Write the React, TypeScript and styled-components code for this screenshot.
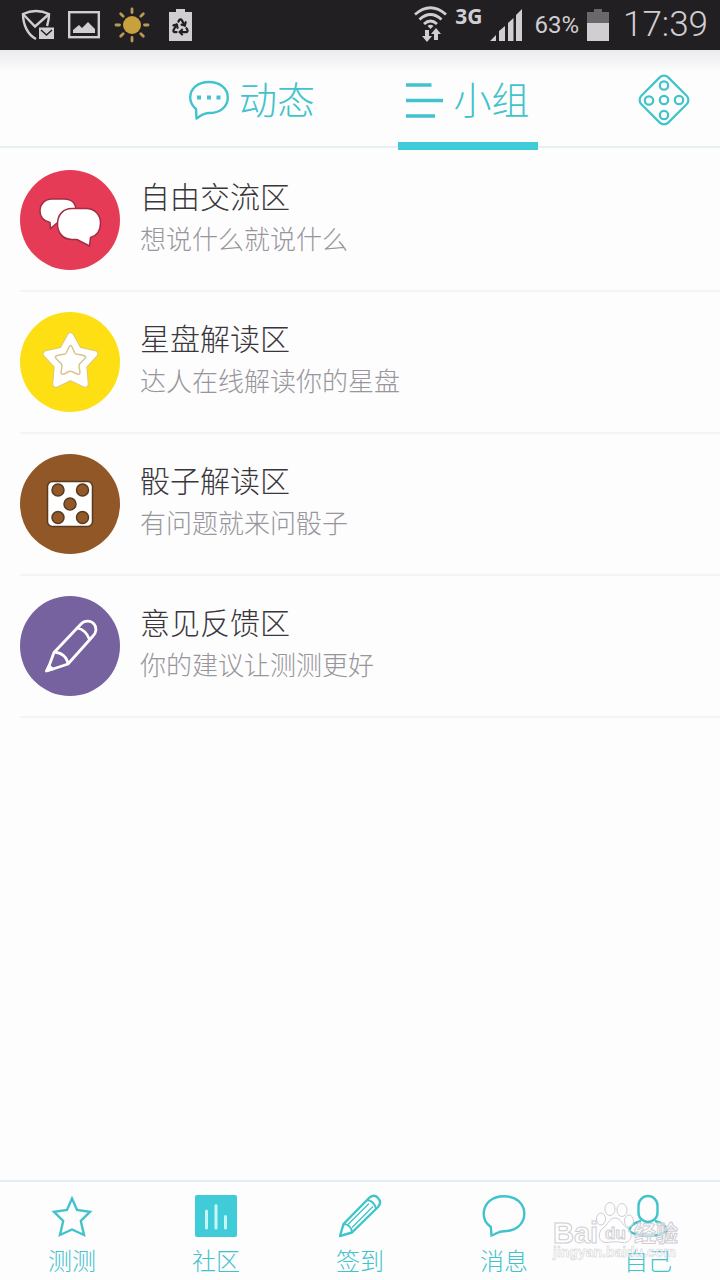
import React from "react";
import styled, { createGlobalStyle } from "styled-components";
import { Recycle } from "lucide-react";

const TEAL = "#40cbd8";
const LINE = "#41c3cc";
const STATUS = "#d0ced1";
const STATUS_BG = "#221f22";

const GlobalStyle = createGlobalStyle`
  * { box-sizing: border-box; }
  body {
    margin: 0;
    background: #fdfdfd;
    font-family: "Noto Sans CJK SC", sans-serif;
    font-weight: 300;
  }
  button { font: inherit; border: 0; padding: 0; background: none; cursor: pointer; }
  a { text-decoration: none; color: inherit; }
  svg { display: block; flex: none; }
`;

const Screen = styled.div`
  min-height: 100vh;
  display: flex;
  flex-direction: column;
`;

const StatusBar = styled.div`
  height: 50px;
  flex: none;
  display: flex;
  align-items: center;
  justify-content: space-between;
  padding: 0 12px 0 21px;
  background: ${STATUS_BG};
  color: ${STATUS};
  font-family: Roboto, sans-serif;
`;

const StatusGroup = styled.div<{ $gap: number }>`
  display: flex;
  align-items: center;
  gap: ${(p) => p.$gap}px;
`;

const Network = styled.span`
  align-self: flex-start;
  font: 700 21px/22px "Noto Sans", sans-serif;
`;

const Percent = styled.span`
  font-size: 24px;
  line-height: 28px;
  font-weight: 400;
  margin-left: 4px;
`;

const Clock = styled.time`
  font-size: 35px;
  line-height: 40px;
  font-weight: 300;
  margin-left: 6px;
`;

const Header = styled.header`
  height: 98px;
  flex: none;
  display: grid;
  grid-template-columns: 2fr 3fr 3fr 2fr;
  border-bottom: 2px solid #e6f1f4;
  background: linear-gradient(#ebe9ec, #fdfdfd 22px);
`;

const TabCell = styled.div<{ $column: number }>`
  grid-column: ${(p) => p.$column};
  display: flex;
  justify-content: center;
  margin-bottom: -4px;
`;

const Tab = styled.button<{ $active?: boolean }>`
  display: flex;
  align-items: center;
  gap: 10px;
  padding: 8px 8px 0;
  border-bottom: 8px solid ${(p) => (p.$active ? TEAL : "transparent")};
  color: ${LINE};
  font-size: 38px;
  line-height: 56px;
  white-space: nowrap;
`;

const TabLabel = styled.span`
  padding-bottom: 4px;
`;

const DiceButton = styled.button`
  grid-column: 4;
  justify-self: end;
  margin-right: 30px;
  padding-top: 4px;
`;

const List = styled.ul`
  flex: 1;
  list-style: none;
  margin: 0;
  padding: 2px 0 0 20px;
`;

const Row = styled.li`
  border-bottom: 2px solid #f4f4f5;
`;

const RowLink = styled.a`
  display: flex;
  gap: 20px;
  padding: 20px 20px 20px 0;
`;

const Avatar = styled.div<{ $color: string }>`
  width: 100px;
  height: 100px;
  flex: none;
  border-radius: 50%;
  background: ${(p) => p.$color};
`;

const RowText = styled.div`
  padding-top: 4px;
`;

const Title = styled.h2`
  margin: 0;
  font-size: 30px;
  line-height: 42px;
  font-weight: 300;
  color: #39363c;
`;

const Subtitle = styled.p`
  margin: 0;
  font-size: 26px;
  line-height: 44px;
  color: #98969c;
`;

const NavBar = styled.nav`
  position: relative;
  flex: none;
  display: grid;
  grid-template-columns: repeat(5, 1fr);
  border-top: 2px solid #dff0f2;
`;

const NavItem = styled.a`
  display: flex;
  flex-direction: column;
  align-items: center;
  height: 98px;
  padding-top: 12px;
  color: ${LINE};
  font-size: 24px;
  line-height: 44px;
`;

const Watermark = styled.svg`
  position: absolute;
  right: 38px;
  bottom: 14px;
  pointer-events: none;
`;

const ShieldMailIcon = () => (
  <svg width="33" height="32" viewBox="0 0 33 32" fill="none" stroke={STATUS} strokeWidth="2.4">
    <path d="M15 30C7 26 2 16 2 5Q15-1 28 5Q28 11 26 17" />
    <path d="M2 5L14 17.500L28 5" />
    <path d="M18 18.500H33V30H18Z" fill={STATUS} stroke="none" />
    <path d="M20 21L25.500 26L31 21" stroke={STATUS_BG} strokeWidth="1.500" />
  </svg>
);

const PictureIcon = () => (
  <svg width="32" height="28" viewBox="0 0 32 28">
    <rect x="1.200" y="1.200" width="29.600" height="25" fill="none" stroke={STATUS} strokeWidth="2.400" />
    <path d="M5 22V19L11 14L14 17L20 11L27 18V22Z" fill={STATUS} />
  </svg>
);

const SunIcon = () => (
  <svg width="36" height="36" viewBox="-18 -18 36 36">
    <circle r="9" fill="#c8a03d" />
    {[0, 45, 90, 135, 180, 225, 270, 315].map((a) => (
      <path key={a} d="M12.500 0H16" transform={`rotate(${a})`} stroke="#b99a55" strokeWidth="2.800" strokeLinecap="round" />
    ))}
  </svg>
);

const RecycleBatteryIcon = () => (
  <svg width="31" height="34" viewBox="0 0 31 34">
    <path d="M5 4H12V1H21V4H28V33H5Z" fill={STATUS} />
    <Recycle x={7} y={9} size={19} color={STATUS_BG} strokeWidth={2.8} />
  </svg>
);

const WifiIcon = () => (
  <svg width="33" height="38" viewBox="0 0 33 38" fill="none" stroke={STATUS} strokeWidth="2.800">
    <path d="M1 8.500Q16.500-5 32 8.500" />
    <path d="M5.500 13.500Q16.500 3.500 27.500 13.500" />
    <path d="M10 18Q16.500 12 23 18" />
    <path d="M13.500 20Q16.500 17.500 19.500 20L16.500 23Z" fill={STATUS} stroke="none" />
    <path d="M11 24H15V30H18L13 36L8 30H11Z M20 34H24V28H27L22 22L17 28H20Z" fill={STATUS} stroke="none" />
  </svg>
);

const SignalIcon = () => (
  <svg width="32" height="32" viewBox="0 0 32 32" fill={STATUS}>
    <path d="M0 32L6 26V32Z M9 22L15 17V32H9Z M18 14L23.500 9V32H18Z M26 6L32 0V32H26Z" />
  </svg>
);

const BatteryIcon = () => (
  <svg width="22" height="34" viewBox="0 0 22 34">
    <path d="M0 4H7V1H15V4H22V15H0Z" fill="#6a686a" />
    <path d="M0 15H22V33H0Z" fill={STATUS} />
  </svg>
);

const FeedIcon = () => (
  <svg width="40" height="40" viewBox="0 0 40 40" fill="none" stroke={LINE} strokeWidth="2.400" strokeLinejoin="round">
    <path d="M7.500 38.500L7 29C3.500 26 1.200 22 1.200 17.500C1.200 8.500 9 2 20 2C31 2 38.800 8.500 38.800 17.500C38.800 27 31 33 20 33C14.500 33 13 35 7.500 38.500Z" />
    <path d="M8 17.500H12M18 17.500H22M27.500 17.500H31.500" strokeWidth="4" />
  </svg>
);

const GroupIcon = () => (
  <svg width="37" height="40" viewBox="0 0 37 40" stroke={LINE} strokeWidth="3.400">
    <path d="M0 5H25.500M0 20.500H37M0 36H29" />
  </svg>
);

const DiceIcon = () => (
  <svg width="52" height="52" viewBox="0 0 52 52" fill="none" stroke={LINE} strokeWidth="2.200">
    <rect x="7" y="7" width="38" height="38" rx="6" transform="rotate(45 26 26)" />
    <circle cx="26" cy="11.500" r="4.200" />
    <circle cx="11" cy="26.500" r="4.200" />
    <circle cx="26" cy="26" r="4.200" />
    <circle cx="41" cy="26" r="4.200" />
    <circle cx="26" cy="41" r="4.200" />
  </svg>
);

const BubblesArt = () => (
  <svg viewBox="0 0 100 100" fill="#fff" stroke="#a52c45" strokeWidth="1.500">
    <path d="M32 29H44C52 29 56 34 56 41C56 49 51 53 44 53H37L30.500 58.500L30 52.500C24 51 20 47 20 41C20 34 25 29 32 29Z" />
    <path d="M52 38.500H66C75 38.500 80.500 45 80.500 53C80.500 61 76 66 70.500 67.500L69.500 76L57 69.500H52C43 69.500 37.500 63 37.500 54C37.500 45 43 38.500 52 38.500Z" />
  </svg>
);

const STAR = "M50.500 24L58.500 38.500L74.500 42L63.500 54L65 72L50.500 65L36 72L37.500 54L26.500 42L42.500 38.500Z";

const StarArt = () => (
  <svg viewBox="0 0 100 100" strokeLinejoin="round">
    <path d={STAR} fill="#fff" stroke="#dfc878" strokeWidth="7.500" />
    <path d={STAR} fill="#fff" stroke="#fff" strokeWidth="5.500" />
    <path
      d="M49 35Q50.500 32 52 35L54.500 40.500Q55 41.500 56 42L64 43.500Q66.500 44.500 65 46.500L60 51.500Q59 52.500 59 54L60 60.500Q59.500 63 57 62L52 59.500Q50.500 59 49 59.500L44 62Q41.500 63 41 60.500L42 54Q42 52.500 41 51.500L36 46.500Q34.500 44.500 37 43.500L45 42Q46 41.500 46.500 40.500Z"
      fill="none"
      stroke="#d8c48c"
      strokeWidth="1.500"
    />
  </svg>
);

const DiceArt = () => (
  <svg viewBox="0 0 100 100" stroke="#573a20" strokeWidth="1.500">
    <rect x="27.500" y="27.500" width="45" height="45" rx="5" fill="#fff" />
    {[[38, 36], [62.5, 36], [50, 50], [38, 63.5], [62.5, 63.5]].map(([x, y]) => (
      <circle key={`${x}-${y}`} cx={x} cy={y} r="6" fill="#935828" />
    ))}
  </svg>
);

const PenArt = () => (
  <svg viewBox="0 0 100 100" fill="none" stroke="#fff" strokeWidth="2.800" strokeLinecap="round" strokeLinejoin="round">
    <path d="M34 56.500L61 28C65 24 71 24.500 74 28C77 31.500 76.500 36.500 73 40L48 68L33 73L26.500 75L29 70L34 56.500C41 56 47 61 48 68" />
    <path d="M57.500 32C62 33 67 37 69.500 43.500" />
    <path d="M29 70L33 73L27 74.500Z" fill="#fff" />
  </svg>
);

const NavSvg = ({ children }: { children: React.ReactNode }) => (
  <svg width="44" height="44" viewBox="0 0 44 44" fill="none" stroke={LINE} strokeWidth="2.400" strokeLinejoin="miter">
    {children}
  </svg>
);

const navItems = [
  {
    label: "测测",
    icon: <path d="M22 4.500L27 16L40 17.800L30.800 27L34 41L22 35.500L10 41L13.200 27L4 17.800L17 16Z" />,
  },
  {
    label: "社区",
    icon: (
      <>
        <rect x="1" y="1" width="42" height="42" rx="2" fill={TEAL} stroke="none" />
        <path d="M12.500 17V34M22 11.500V34M31.500 22.500V34" stroke="#c6f7f8" strokeWidth="3" strokeLinecap="round" />
      </>
    ),
  },
  {
    label: "签到",
    icon: (
      <>
        <path d="M2 42L5.500 30L31 4C34.500.500 38 1.500 40 4C42.500 6.500 43 9.500 40 13L14 38.500Z" strokeLinejoin="round" />
        <path d="M5.500 30C10 30 14 33.500 14 38.500M29 6C34 6.500 37 10 38 15" strokeWidth="1.800" />
        <path d="M10 30.500L31 9.500M14 33.500L35 12.500" strokeWidth="1.400" />
      </>
    ),
  },
  {
    label: "消息",
    icon: <path d="M9.500 41.500L8.800 33C4 29.500 1.700 25 1.700 20C1.700 9.500 10 2.200 22 2.200C34 2.200 42.300 9.500 42.300 19.500C42.300 30 34 37.200 22 37.200C17 37.200 15.500 39 9.500 41.500Z" />,
  },
  {
    label: "自己",
    icon: (
      <>
        <rect x="12.500" y="2" width="19" height="26" rx="9.500" />
        <path d="M15 27C7 29 3.500 33 3 37C8 40.500 14 42 22 42C30 42 36 40.500 41 37C40.500 33 37 29 29 27" />
      </>
    ),
  },
];

const groups = [
  { title: "自由交流区", subtitle: "想说什么就说什么", color: "#e53b56", art: <BubblesArt /> },
  { title: "星盘解读区", subtitle: "达人在线解读你的星盘", color: "#fedf13", art: <StarArt /> },
  { title: "骰子解读区", subtitle: "有问题就来问骰子", color: "#925727", art: <DiceArt /> },
  { title: "意见反馈区", subtitle: "你的建议让测测更好", color: "#7762a0", art: <PenArt /> },
];

export default function App() {
  return (
    <Screen>
      <GlobalStyle />
      <StatusBar>
        <StatusGroup $gap={14}>
          <ShieldMailIcon />
          <PictureIcon />
          <SunIcon />
          <RecycleBatteryIcon />
        </StatusGroup>
        <StatusGroup $gap={8}>
          <WifiIcon />
          <Network>3G</Network>
          <SignalIcon />
          <Percent>63%</Percent>
          <BatteryIcon />
          <Clock>17:39</Clock>
        </StatusGroup>
      </StatusBar>
      <Header>
        <TabCell $column={2}>
          <Tab type="button">
            <FeedIcon />
            <TabLabel>动态</TabLabel>
          </Tab>
        </TabCell>
        <TabCell $column={3}>
          <Tab type="button" $active>
            <GroupIcon />
            <TabLabel>小组</TabLabel>
          </Tab>
        </TabCell>
        <DiceButton type="button" aria-label="骰子">
          <DiceIcon />
        </DiceButton>
      </Header>
      <List>
        {groups.map((g) => (
          <Row key={g.title}>
            <RowLink href="#">
              <Avatar $color={g.color}>{g.art}</Avatar>
              <RowText>
                <Title>{g.title}</Title>
                <Subtitle>{g.subtitle}</Subtitle>
              </RowText>
            </RowLink>
          </Row>
        ))}
      </List>
      <NavBar>
        {navItems.map((n) => (
          <NavItem key={n.label} href="#">
            <NavSvg>{n.icon}</NavSvg>
            {n.label}
          </NavItem>
        ))}
        <Watermark
          width="130"
          height="66"
          viewBox="0 0 130 66"
          fill="#fff"
          fillOpacity="0.6"
          stroke="#cfcdd3"
          strokeWidth="1"
          fontFamily="Liberation Sans, Noto Sans CJK SC, sans-serif"
          fontWeight="700"
        >
          <text x="1" y="43" fontSize="29">Bai</text>
          <ellipse cx="49" cy="19" rx="4.500" ry="6" />
          <ellipse cx="58" cy="9" rx="5" ry="6.500" />
          <ellipse cx="70" cy="10" rx="5" ry="6.500" />
          <ellipse cx="77" cy="21" rx="4.500" ry="6" />
          <path d="M63 18C69 18 70 25 75 28C82 33 80 43 71 42.500C65 41.500 61 41.500 55 42.500C46 43 45 33 51 28C56 25 57 18 63 18Z" />
          <text x="53" y="39" fontSize="17">du</text>
          <text x="82" y="41" fontSize="22">经验</text>
          <text x="1" y="57" fontSize="14" strokeWidth="0.500">jingyan.baidu.com</text>
        </Watermark>
      </NavBar>
    </Screen>
  );
}
